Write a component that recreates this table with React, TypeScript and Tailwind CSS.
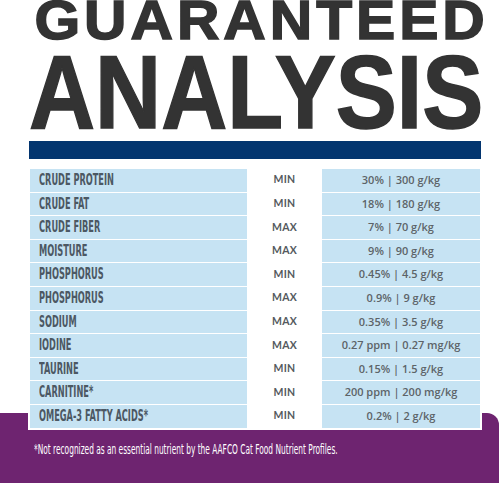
const rows = [
  ["CRUDE PROTEIN", "MIN", "30% | 300 g/kg"],
  ["CRUDE FAT", "MIN", "18% | 180 g/kg"],
  ["CRUDE FIBER", "MAX", "7% | 70 g/kg"],
  ["MOISTURE", "MAX", "9% | 90 g/kg"],
  ["PHOSPHORUS", "MIN", "0.45% | 4.5 g/kg"],
  ["PHOSPHORUS", "MAX", "0.9% | 9 g/kg"],
  ["SODIUM", "MAX", "0.35% | 3.5 g/kg"],
  ["IODINE", "MAX", "0.27 ppm | 0.27 mg/kg"],
  ["TAURINE", "MIN", "0.15% | 1.5 g/kg"],
  ["CARNITINE*", "MIN", "200 ppm | 200 mg/kg"],
  ["OMEGA-3 FATTY ACIDS*", "MIN", "0.2% | 2 g/kg"],
];

const App = () => {
  return (
    <div className="w-[500px] h-[483px] overflow-hidden bg-white">
      {/* title */}
      <div className="h-[141px] pl-[12px] flex flex-col items-center font-['Liberation_Sans','Arial',sans-serif] font-bold text-[#333333] [-webkit-text-stroke:1.5px_#333333]">
        <div className="text-[55.5px] leading-[40px] h-[40px] pl-[10px] tracking-[3.7px] scale-x-[1.06] whitespace-nowrap">GUARANTEED</div>
        <div className="text-[104px] leading-[80px] h-[80px] mt-[11.5px] scale-x-[0.88] whitespace-nowrap">ANALYSIS</div>
      </div>

      <div className="ml-[29px] w-[452px] h-[18px] bg-[#03356f]" />

      {/* table */}
      <div className="relative z-10 ml-[28px] mt-[8px] w-[454px] bg-white p-[2px] flex flex-col gap-[1px]">
        {rows.map(([name, kind, value], i) => (
          <div key={i} className="grid grid-cols-[217px_75px_158px] h-[22.6px]">
            <div className="bg-[#c6e3f3] flex items-center pl-[9px] overflow-hidden">
              <span className="origin-left scale-x-[0.61] whitespace-nowrap font-['DejaVu_Sans_Condensed',sans-serif] font-bold text-[15px] text-[#4c5863]">
                {name}
              </span>
            </div>
            <div className="flex items-center justify-center font-['Lato','Open_Sans',sans-serif] font-bold text-[10.5px] text-[#555a5e] tracking-[0.3px]">
              {kind}
            </div>
            <div className="bg-[#c6e3f3] flex items-center justify-center font-['Open_Sans',sans-serif] font-semibold text-[11px] text-[#5d6368] whitespace-nowrap">
              {value}
            </div>
          </div>
        ))}
      </div>

      {/* footer */}
      <div className="-mt-[17px] w-[499px] h-[70px] bg-[#6e2470] rounded-tr-[12px] pl-[34px] pt-[23px]">
        <span className="inline-block origin-left scale-x-[0.59] whitespace-nowrap font-['DejaVu_Sans_Condensed',sans-serif] text-[14px] text-white">
          *Not recognized as an essential nutrient by the AAFCO Cat Food Nutrient Profiles.
        </span>
      </div>
    </div>
  );
};

export default App;
